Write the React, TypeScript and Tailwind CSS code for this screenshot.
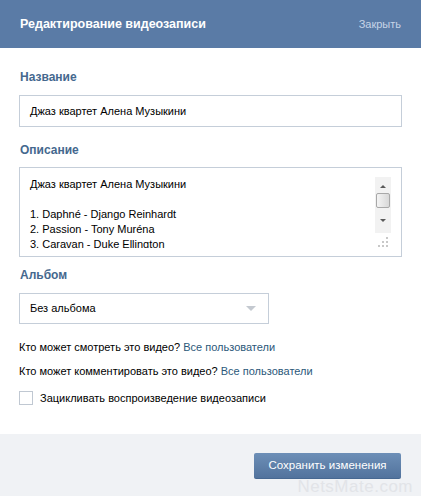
export default function App() {
    const font = { fontFamily: '"Liberation Sans", Arial, sans-serif' };

    return (
        <div className="w-[421px] h-[496px] bg-white flex flex-col text-[11px] text-[#000]" style={font}>
            <div className="h-[48px] bg-[#5a7ba6] flex items-center justify-between px-[20px] shrink-0">
                <span className="text-white font-bold text-[12.5px]">Редактирование видеозаписи</span>
                <span className="text-[#c6d4e6] text-[11px]">Закрыть</span>
            </div>

            <div className="flex-1 px-[19px] pt-[21px]">
                <div className="text-[#45688e] font-bold text-[12px] leading-[16px] pl-px">Название</div>
                <div className="mt-[10px] h-[32px] w-[383px] border border-[#c5ced9] flex items-center px-[10px]">
                    Джаз квартет Алена Музыкини
                </div>

                <div className="text-[#45688e] font-bold text-[12px] leading-[16px] pl-px mt-[15px]">Описание</div>
                <div className="mt-[9px] h-[90px] w-[383px] border border-[#c5ced9] flex items-start">
                    <div className="flex-1 h-[80px] overflow-hidden pl-[10px] pt-[9px] leading-[15px]">
                        <div>Джаз квартет Алена Музыкини</div>
                        <div className="h-[15px]"></div>
                        <div>1. Daphné - Django Reinhardt</div>
                        <div>2. Passion - Tony Muréna</div>
                        <div>3. Caravan - Duke Ellington</div>
                    </div>
                    <div className="w-[16px] mr-[10px] mt-[9px] flex flex-col">
                        <div className="h-[56px] bg-[#f2f2f2] flex flex-col items-center">
                            <svg width="8" height="14" viewBox="0 0 8 14" className="mt-[2px]">
                                <path d="M1 9 L4 6 L7 9 Z" fill="#5a5a5a" />
                            </svg>
                            <div className="w-[14px] h-[15px] border border-[#a8a8a8] rounded-[2px] bg-gradient-to-r from-[#f4f4f4] to-[#d8d8d8]"></div>
                            <svg width="8" height="14" viewBox="0 0 8 14" className="mt-[6px]">
                                <path d="M1 5 L4 8 L7 5 Z" fill="#5a5a5a" />
                            </svg>
                        </div>
                        <svg width="16" height="12" viewBox="0 0 16 12" className="mt-[2px]">
                            <rect x="11" y="2" width="2" height="2" fill="#c8c8c8" />
                            <rect x="7" y="6" width="2" height="2" fill="#c8c8c8" />
                            <rect x="11" y="6" width="2" height="2" fill="#c8c8c8" />
                            <rect x="3" y="10" width="2" height="2" fill="#c8c8c8" />
                            <rect x="7" y="10" width="2" height="2" fill="#c8c8c8" />
                            <rect x="11" y="10" width="2" height="2" fill="#c8c8c8" />
                        </svg>
                    </div>
                </div>

                <div className="text-[#45688e] font-bold text-[12px] leading-[16px] pl-px mt-[10px]">Альбом</div>
                <div className="mt-[10px] h-[31px] w-[250px] border border-[#c5ced9] flex items-center justify-between pl-[10px] pr-[12px]">
                    <span>Без альбома</span>
                    <svg width="10" height="6" viewBox="0 0 10 6">
                        <path d="M0 0 L10 0 L5 5 Z" fill="#c4c9d0" />
                    </svg>
                </div>

                <div className="mt-[16px] leading-[14px]">
                    Кто может смотреть это видео? <span className="text-[#2b587a]">Все пользователи</span>
                </div>
                <div className="mt-[10px] leading-[14px]">
                    Кто может комментировать это видео? <span className="text-[#2b587a]">Все пользователи</span>
                </div>
                <div className="mt-[13px] flex items-center gap-[7px]">
                    <div className="w-[14px] h-[14px] border border-[#c0c8d2] bg-white"></div>
                    <span className="leading-[14px]">Зацикливать воспроизведение видеозаписи</span>
                </div>
            </div>

            <div className="h-[62px] bg-[#f0f2f5] shrink-0 flex items-start justify-end pr-[20px] pt-[19px] relative">
                <button className="h-[26px] w-[147px] rounded-[2px] bg-gradient-to-b from-[#6d8fb7] to-[#52739d] border-b border-[#476891] text-white text-[11.5px]">
                    Сохранить изменения
                </button>
                <span className="absolute right-[8px] bottom-[1px] text-[17px] leading-none text-[#e2e4e8] tracking-[0.5px] pointer-events-none">NetsMate.com</span>
            </div>
        </div>
    );
}
